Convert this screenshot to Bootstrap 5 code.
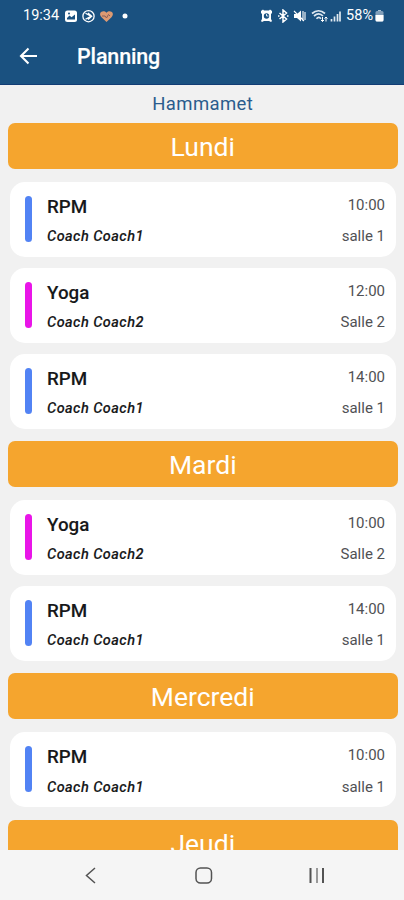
<!DOCTYPE html>
<html lang="fr">
<head>
<meta charset="utf-8">
<meta name="viewport" content="width=device-width, initial-scale=1">
<title>Planning</title>
<link href="https://cdn.jsdelivr.net/npm/bootstrap@5.3.0/dist/css/bootstrap.min.css" rel="stylesheet">
<style>
body{font-family:Roboto,"Liberation Sans",sans-serif;background:#f1f1f1;color:#17181a;height:900px}
.top-area{background:#1a5180;height:85px;border-bottom:1px solid #123c74}
.status{height:31px;padding:0 20px 0 23px;font-size:14.5px;line-height:31px}
.status svg,.app-title svg{display:block;flex:none}
.app-title{height:52px;padding-left:19px}
.app-title h1{font-size:21.5px;font-weight:500;line-height:52px;margin-left:39px;letter-spacing:-.15px;-webkit-text-stroke:.15px #fff}
.place{color:#2b5c8d;font-size:18.5px;line-height:38px;height:38px;letter-spacing:.4px}
.schedule{padding:0 6.5px 0 8px}
.day{background:#f5a52e;color:#fff;height:45.7px;line-height:48px;border-radius:7px;font-size:26.5px;margin-bottom:13.2px;flex:none}
.slot+.day{margin-top:1.6px}
.slot{background:#fff;height:75.2px;border-radius:15px;margin:0 2px 10.7px;padding:14px 10.5px 0 14.5px;flex:none}
.stripe{width:7.5px;height:46px;border-radius:4px;background:#5283f4;margin-right:15px;flex:none}
.stripe.pink{background:#e915e8}
.course{font-size:18.8px;font-weight:500;line-height:22px}
.course,.coach{-webkit-text-stroke:.1px}
.coach{font-size:14.5px;font-weight:500;font-style:italic;line-height:18px;margin-top:10.5px;letter-spacing:.46px}
.hour,.room{font-size:15px;color:#505154;line-height:18px}
.room{margin-top:13.5px}
.sysnav{height:50px;background:#f5f5f5}
</style>
</head>
<body class="d-flex flex-column overflow-hidden">
<header class="top-area text-white flex-shrink-0">
  <div class="status d-flex align-items-center">
    <span>19:34</span>
    <svg style="margin-left:6px" width="54" height="14" viewBox="0 0 54 14">
      <rect x="0" y="1.5" width="12" height="11.5" rx="2.5" fill="#fff"/><path d="M2 10.5V9l2.500-2.500 2 1.800L10 5.500v5z" fill="#1a5180"/><circle cx="4" cy="4.500" r="1" fill="#1a5180"/>
      <circle cx="23.500" cy="7.200" r="5.600" fill="none" stroke="#fff" stroke-width="1.300"/><path d="M20.500 4.300l5.500 2.900-5.500 3M23 4l3.700 3.200L23 10.500" fill="none" stroke="#fff" stroke-width="1.300"/>
      <path d="M41.500 13l-5-4.800C32.500 4 38 .2 41.500 3.700 45 .2 50.500 4 46.500 8.200z" fill="#dd9a72"/><path d="M37 7h3l1.500 2 2-3.500L45 7" fill="none" stroke="#875f5b"/>
    </svg>
    <svg width="6" height="6" viewBox="0 0 6 6" style="margin-left:3px"><circle cx="3" cy="3" r="2.500" fill="#fff"/></svg>
    <svg class="ms-auto" width="82" height="14" viewBox="0 0 82 14">
      <path d="M0 2l2-1.500 1 1h5L9 .5 11 2v2l-1 1v5l1 2-1 1-2-1H3l-2 1-1-1 1-2V5L0 4z" fill="#fff"/><circle cx="5.500" cy="7" r="2.700" fill="#1a5180"/><path d="M5.500 5v2h2" stroke="#fff" fill="none" stroke-width=".8"/>
      <path d="M18.500 4l7 6-3.500 3V1l3.500 3-7 6M17 7h1.500M26 7h1.500" fill="none" stroke="#fff" stroke-width="1.500"/>
      <path d="M33 5h3l4-3.500v11L36 9h-3z" fill="#fff"/><path d="M33 2l10 10M42 2v10M44 3v8" stroke="#fff" stroke-width="1.100"/>
      <path d="M51 4.500c4-3.500 9-3.500 13 0M53 7c3-2.700 6.500-2.700 9 0M55.500 9.700c1.500-1.700 3-1.700 4.500 0" fill="none" stroke="#dfe8f0" stroke-width="1.700"/><path d="M61.500 8v4.500M60 11l1.500 1.500L63 11M65 12.500V8M63.500 9.500L65 8l1.500 1.500" fill="none" stroke="#fff" stroke-width="1"/>
      <path d="M70.500 10v2.500M73.500 7.500v5M76.500 5v7.500M79 2.500v10" stroke="#e0e9f0" stroke-width="1.700"/>
    </svg>
    <span style="margin-left:3px">58%</span>
    <svg style="margin-left:2px" width="9" height="13" viewBox="0 0 9 13"><path d="M3 1h3v1.500H3z" fill="#a7bfd2"/><rect x=".5" y="2" width="8" height="10.500" rx="1.500" fill="#829fba"/><path d="M.5 6h8v5q0 1.500-1.500 1.500H2Q.5 12.500.5 11z" fill="#fff"/></svg>
  </div>
  <div class="app-title d-flex align-items-center">
    <svg width="19" height="18" viewBox="0 0 19 18" style="margin-top:-2px"><path d="M18 9H2.500M9.500 1.500L2 9l7.500 7.500" fill="none" stroke="#fff" stroke-width="2.100"/></svg>
    <h1 class="mb-0">Planning</h1>
  </div>
</header>
<main class="schedule flex-grow-1 overflow-hidden d-flex flex-column">
  <div class="place text-center flex-shrink-0"><span>Hammamet</span></div>
  <div class="day text-center"><span>Lundi</span></div>
  <div class="slot d-flex"><i class="stripe"></i><div class="flex-grow-1"><div class="course">RPM</div><div class="coach">Coach Coach1</div></div><div class="text-end"><div class="hour">10:00</div><div class="room">salle 1</div></div></div>
  <div class="slot d-flex"><i class="stripe pink"></i><div class="flex-grow-1"><div class="course">Yoga</div><div class="coach">Coach Coach2</div></div><div class="text-end"><div class="hour">12:00</div><div class="room">Salle 2</div></div></div>
  <div class="slot d-flex"><i class="stripe"></i><div class="flex-grow-1"><div class="course">RPM</div><div class="coach">Coach Coach1</div></div><div class="text-end"><div class="hour">14:00</div><div class="room">salle 1</div></div></div>
  <div class="day text-center"><span>Mardi</span></div>
  <div class="slot d-flex"><i class="stripe pink"></i><div class="flex-grow-1"><div class="course">Yoga</div><div class="coach">Coach Coach2</div></div><div class="text-end"><div class="hour">10:00</div><div class="room">Salle 2</div></div></div>
  <div class="slot d-flex"><i class="stripe"></i><div class="flex-grow-1"><div class="course">RPM</div><div class="coach">Coach Coach1</div></div><div class="text-end"><div class="hour">14:00</div><div class="room">salle 1</div></div></div>
  <div class="day text-center"><span>Mercredi</span></div>
  <div class="slot d-flex"><i class="stripe"></i><div class="flex-grow-1"><div class="course">RPM</div><div class="coach">Coach Coach1</div></div><div class="text-end"><div class="hour">10:00</div><div class="room">salle 1</div></div></div>
  <div class="day text-center"><span>Jeudi</span></div>
</main>
<nav class="sysnav d-flex justify-content-center flex-shrink-0">
  <svg width="404" height="50" viewBox="0 0 404 50" fill="none" stroke="#535353" stroke-width="1.500"><path d="M95 18l-8.500 7.500L95 33"/><rect x="196" y="18" width="15.500" height="15" rx="4.500"/><path d="M310.500 18v15M323 18v15" stroke-width="2"/><path d="M317 18v15" stroke="#999" stroke-width="2"/></svg>
</nav>
<script src="https://cdn.jsdelivr.net/npm/bootstrap@5.3.0/dist/js/bootstrap.bundle.min.js"></script>
</body>
</html>
